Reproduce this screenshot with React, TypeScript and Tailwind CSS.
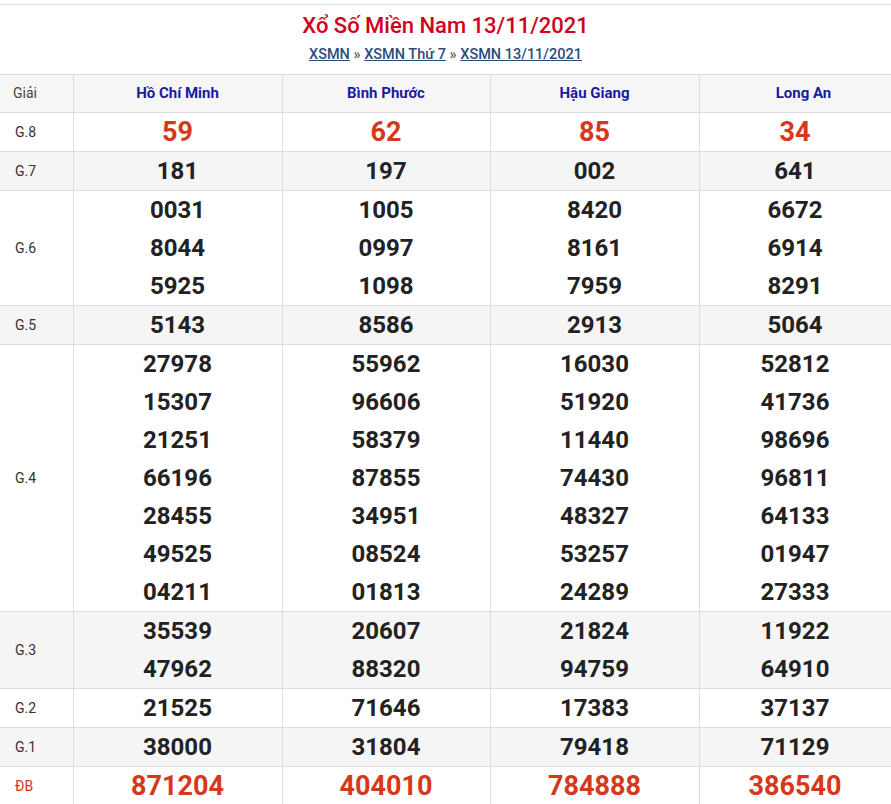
const provinces = ["Hồ Chí Minh", "Bình Phước", "Hậu Giang", "Long An"];

const rows: { label: string; values: string[][]; red?: boolean }[] = [
  { label: "G.8", red: true, values: [["59"], ["62"], ["85"], ["34"]] },
  { label: "G.7", values: [["181"], ["197"], ["002"], ["641"]] },
  {
    label: "G.6",
    values: [
      ["0031", "8044", "5925"],
      ["1005", "0997", "1098"],
      ["8420", "8161", "7959"],
      ["6672", "6914", "8291"],
    ],
  },
  { label: "G.5", values: [["5143"], ["8586"], ["2913"], ["5064"]] },
  {
    label: "G.4",
    values: [
      ["27978", "15307", "21251", "66196", "28455", "49525", "04211"],
      ["55962", "96606", "58379", "87855", "34951", "08524", "01813"],
      ["16030", "51920", "11440", "74430", "48327", "53257", "24289"],
      ["52812", "41736", "98696", "96811", "64133", "01947", "27333"],
    ],
  },
  {
    label: "G.3",
    values: [
      ["35539", "47962"],
      ["20607", "88320"],
      ["21824", "94759"],
      ["11922", "64910"],
    ],
  },
  { label: "G.2", values: [["21525"], ["71646"], ["17383"], ["37137"]] },
  { label: "G.1", values: [["38000"], ["31804"], ["79418"], ["71129"]] },
  { label: "ĐB", red: true, values: [["871204"], ["404010"], ["784888"], ["386540"]] },
];

export default function App() {
  return (
    <div className="w-[891px] overflow-hidden bg-white pt-1 font-[Roboto,sans-serif]">
      <div className="flex h-[70px] flex-col items-center border-t border-[#ddd] pt-[5px]">
        <h1 className="text-[22px] font-medium leading-[32px] text-[#d0021b]">Xổ Số Miền Nam 13/11/2021</h1>
        <p className="mt-[2px] text-[14.5px] font-medium text-[#555]">
          <a className="text-[#2f4b7c] underline">XSMN</a> »{" "}
          <a className="text-[#2f4b7c] underline">XSMN Thứ 7</a> »{" "}
          <a className="text-[#2f4b7c] underline">XSMN 13/11/2021</a>
        </p>
      </div>
      <table className="w-[908px] table-fixed border-collapse">
        <colgroup>
          <col className="w-[73px]" />
          <col className="w-[209px]" />
          <col className="w-[208px]" />
          <col className="w-[209px]" />
          <col className="w-[209px]" />
        </colgroup>
        <thead>
          <tr className="h-[38px] bg-[#f6f6f6]">
            <th className="border border-[#ddd] border-l-0 pl-[13px] text-left text-[14px] font-normal text-[#444]">Giải</th>
            {provinces.map((p) => (
              <th key={p} className="border border-[#ddd] text-[15px] font-bold text-[#1a1aa0]">
                {p}
              </th>
            ))}
          </tr>
        </thead>
        <tbody>
          {rows.map((r, i) => (
            <tr key={r.label} className={i % 2 === 1 ? "bg-[#f5f5f5]" : "bg-white"}>
              <td
                className={`border border-[#ddd] border-l-0 pl-[15px] text-[14px] ${
                  r.label === "ĐB" ? "text-[#d6381c]" : "text-[#333]"
                }`}
              >
                {r.label}
              </td>
              {r.values.map((v, j) => (
                <td key={j} className={`border border-[#ddd] ${j === 3 ? "pr-[17px]" : ""} text-center`}>
                  {v.map((n) => (
                    <div
                      key={n}
                      className={`h-[38px] leading-[38px] font-bold ${
                        r.red ? "text-[27px] text-[#d6381c]" : "text-[24px] text-[#222]"
                      }`}
                    >
                      {n}
                    </div>
                  ))}
                </td>
              ))}
            </tr>
          ))}
        </tbody>
      </table>
    </div>
  );
}
